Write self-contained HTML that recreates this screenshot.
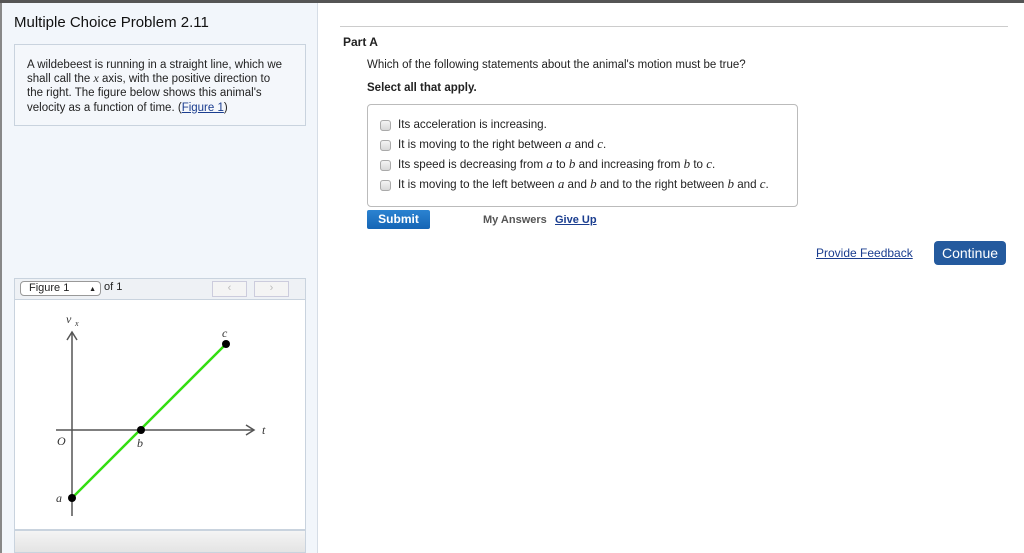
<!DOCTYPE html>
<html><head><style>
*{margin:0;padding:0;box-sizing:border-box}
body{width:1024px;height:553px;overflow:hidden;background:#fff;font-family:"Liberation Sans",Arial,sans-serif;color:#222;position:relative}
.abs{position:absolute}
.m{font-family:"Liberation Serif",serif;font-style:italic;font-size:13px;line-height:12px}
a{color:#1a3d8f;text-decoration:underline}
.cb{position:absolute;left:380px;width:11px;height:11px;border:1px solid #aaa;border-radius:3px;background:linear-gradient(#f4f4f4,#d8d8d8)}
.opt{position:absolute;left:398px;font-size:11.6px;color:#222;line-height:14px;height:14px}
</style></head><body>
<div class="abs" style="left:0;top:0;width:1024px;height:3px;background:#555"></div>
<div class="abs" style="left:0;top:3px;width:318px;height:550px;background:#f2f6fb;border-right:1px solid #d6dde6"></div>
<div class="abs" style="left:0;top:3px;width:2px;height:550px;background:#888"></div>
<div class="abs" style="left:14px;top:14px;font-size:15px;color:#111">Multiple Choice Problem 2.11</div>
<div class="abs" style="left:14px;top:44px;width:292px;height:82px;border:1px solid #c9d3de;background:#f4f7fb"></div>
<div class="abs" style="left:27px;top:58px;width:258px;font-size:11.5px;line-height:14.2px;color:#222">A wildebeest is running in a straight line, which we shall call the <span class="m" style="font-size:12px">x</span> axis, with the positive direction to the right. The figure below shows this animal's velocity as a function of time. (<a>Figure 1</a>)</div>
<div class="abs" style="left:14px;top:278px;width:292px;height:22px;background:#eef1f5;border:1px solid #c9d3de"></div>
<div class="abs" style="left:20px;top:281px;width:81px;height:15px;border:1px solid #999;border-radius:4px;background:#fff;font-size:11px;padding-left:8px;line-height:13px">Figure 1<span style="position:absolute;right:4px;font-size:7px;top:1px">&#9650;<br></span></div>
<div class="abs" style="left:104px;top:281px;font-size:11px">of 1</div>
<div class="abs" style="left:212px;top:281px;width:35px;height:16px;border:1px solid #ccd;background:#f4f4f4;color:#bbb;font-size:11px;text-align:center">&lsaquo;</div>
<div class="abs" style="left:254px;top:281px;width:35px;height:16px;border:1px solid #ccd;background:#f4f4f4;color:#bbb;font-size:11px;text-align:center">&rsaquo;</div>
<div class="abs" style="left:14px;top:300px;width:292px;height:230px;background:#fff;border-left:1px solid #c9d3de;border-right:1px solid #c9d3de;border-bottom:1px solid #c9d3de"></div>
<div class="abs" style="left:14px;top:530px;width:292px;height:23px;background:linear-gradient(#f4f4f4,#e4e4e4);border:1px solid #c9d3de"></div>
<svg class="abs" style="left:0;top:290px" width="330" height="263">
<g stroke="#555" stroke-width="1.5" fill="none">
<line x1="72" y1="42" x2="72" y2="226"/><polyline points="67,50 72,42 77,50"/>
<line x1="56" y1="140" x2="254" y2="140"/><polyline points="246,135 254,140 246,145"/>
</g>
<line x1="72" y1="208" x2="226" y2="54" stroke="#33dd11" stroke-width="2.5"/>
<circle cx="72" cy="208" r="4"/><circle cx="141" cy="140" r="4"/><circle cx="226" cy="54" r="4"/>
<g font-family="Liberation Serif,serif" font-style="italic" font-size="12" fill="#333">
<text x="66" y="33">v</text><text x="75" y="36" font-size="8">x</text>
<text x="222" y="47">c</text><text x="262" y="144">t</text>
<text x="57" y="155">O</text><text x="137" y="157">b</text><text x="56" y="212">a</text></g>
</svg>
<div class="abs" style="left:340px;top:26px;width:668px;height:1px;background:#ccc"></div>
<div class="abs" style="left:343px;top:35px;font-size:12px;font-weight:bold">Part A</div>
<div class="abs" style="left:367px;top:59px;font-size:11.5px">Which of the following statements about the animal's motion must be true?</div>
<div class="abs" style="left:367px;top:82px;font-size:11.5px;font-weight:bold">Select all that apply.</div>
<div class="abs" style="left:367px;top:104px;width:431px;height:103px;border:1px solid #bbb;border-radius:4px"></div>
<div class="cb" style="top:120px"></div><div class="opt" style="top:118px">Its acceleration is increasing.</div>
<div class="cb" style="top:140px"></div><div class="opt" style="top:138px">It is moving to the right between <span class="m">a</span> and <span class="m">c</span>.</div>
<div class="cb" style="top:160px"></div><div class="opt" style="top:158px">Its speed is decreasing from <span class="m">a</span> to <span class="m">b</span> and increasing from <span class="m">b</span> to <span class="m">c</span>.</div>
<div class="cb" style="top:180px"></div><div class="opt" style="top:178px">It is moving to the left between <span class="m">a</span> and <span class="m">b</span> and to the right between <span class="m">b</span> and <span class="m">c</span>.</div>
<div class="abs" style="left:367px;top:210px;width:63px;height:19px;background:linear-gradient(#2b83d1,#1565b5);border-radius:2px;color:#fff;font-weight:bold;font-size:12px;text-align:center;line-height:19px">Submit</div>
<div class="abs" style="left:483px;top:214px;font-size:11px;font-weight:bold;color:#555">My Answers</div>
<div class="abs" style="left:555px;top:214px;font-size:11px;font-weight:bold"><a>Give Up</a></div>
<div class="abs" style="left:816px;top:246px;font-size:12px"><a>Provide Feedback</a></div>
<div class="abs" style="left:934px;top:241px;width:72px;height:24px;background:#245a9e;border-radius:4px;color:#fff;font-size:14px;text-align:center;line-height:24px">Continue</div>
</body></html>
